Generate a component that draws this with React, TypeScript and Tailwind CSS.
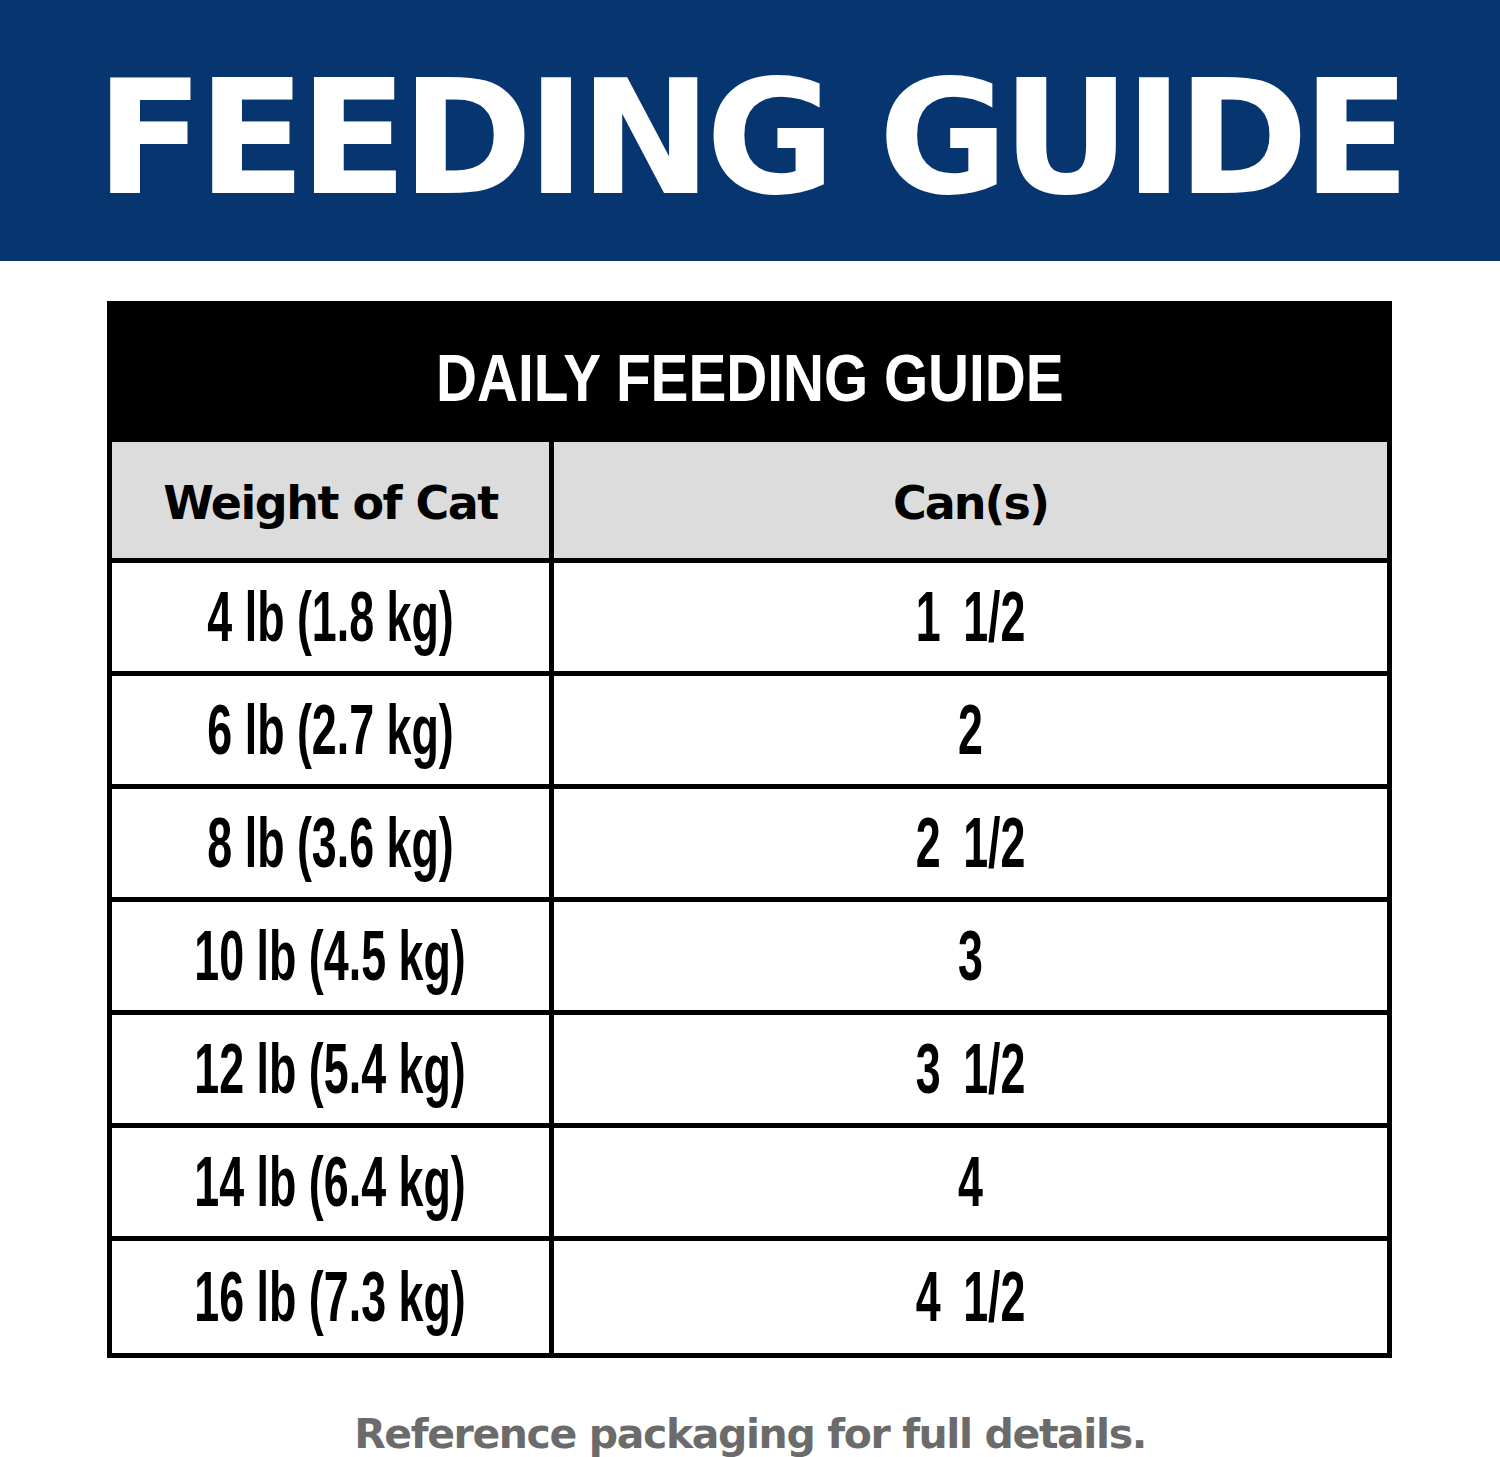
const rows = [
  { weight: "4 lb (1.8 kg)", cans: "1\u20021/2" },
  { weight: "6 lb (2.7 kg)", cans: "2" },
  { weight: "8 lb (3.6 kg)", cans: "2\u20021/2" },
  { weight: "10 lb (4.5 kg)", cans: "3" },
  { weight: "12 lb (5.4 kg)", cans: "3\u20021/2" },
  { weight: "14 lb (6.4 kg)", cans: "4" },
  { weight: "16 lb (7.3 kg)", cans: "4\u20021/2" },
];

const wide = "font-['DejaVu_Sans',sans-serif] font-bold";
const narrow = "font-['Liberation_Sans',Arial,sans-serif] font-bold";

function Cell({ text }: { text: string }) {
  return (
    <span className={`${narrow} inline-block scale-x-[0.64] whitespace-pre text-[70px] leading-none text-black`}>
      {text}
    </span>
  );
}

export default function App() {
  return (
    <div className="w-[1500px] h-[1457px] bg-white flex flex-col">
      <div className="h-[261px] bg-[#063570] flex items-center justify-center pt-[14px]">
        <h1 className={`${wide} text-[158px] leading-none tracking-[-6px] text-white`}>
          FEEDING GUIDE
        </h1>
      </div>

      <div className="mt-[40px] ml-[107px] w-[1285px] border-[5px] border-black">
        <div className="h-[136px] bg-black flex items-center justify-center pt-[8px]">
          <span className={`${narrow} inline-block scale-x-[0.86] text-[66px] leading-none text-white`}>
            DAILY FEEDING GUIDE
          </span>
        </div>

        <div className="grid grid-cols-[437px_5px_1fr] bg-black">
          <div className="h-[116px] bg-[#dcdcdc] flex items-center justify-center pt-[6px]">
            <span className={`${wide} text-[46px] leading-none tracking-[-1.5px] text-black`}>
              Weight of Cat
            </span>
          </div>
          <div />
          <div className="h-[116px] bg-[#dcdcdc] flex items-center justify-center pt-[6px]">
            <span className={`${wide} text-[46px] leading-none tracking-[-2px] text-black`}>
              Can(s)
            </span>
          </div>

          {rows.map((r, i) => (
            <div key={r.weight} className="contents">
              <div
                className={`mt-[5px] bg-white flex items-center justify-center ${
                  i === rows.length - 1 ? "h-[112px]" : "h-[108px]"
                }`}
              >
                <Cell text={r.weight} />
              </div>
              <div />
              <div
                className={`mt-[5px] bg-white flex items-center justify-center ${
                  i === rows.length - 1 ? "h-[112px]" : "h-[108px]"
                }`}
              >
                <Cell text={r.cans} />
              </div>
            </div>
          ))}
        </div>
      </div>

      <p className={`${wide} mt-[56px] text-center text-[41px] leading-none tracking-[-1.4px] text-[#6b6b6b]`}>
        Reference packaging for full details.
      </p>
    </div>
  );
}
